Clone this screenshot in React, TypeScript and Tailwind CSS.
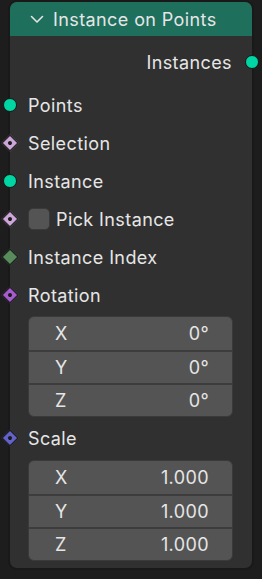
import React from 'react';

type SocketKind = 'circle' | 'diamond';

function Socket({ kind, color, dot, side = 'left' }: { kind: SocketKind; color: string; dot?: boolean; side?: 'left' | 'right' }) {
  const pos = side === 'left' ? 'left-[-7px]' : 'right-[-7px]';
  if (kind === 'circle') {
    return (
      <span
        className={`absolute ${pos} top-1/2 -translate-y-1/2 w-[14px] h-[14px] rounded-full border border-[#161616]`}
        style={{ backgroundColor: color }}
      />
    );
  }
  return (
    <span className={`absolute ${pos} top-1/2 -translate-y-1/2 w-[14px] h-[14px] flex items-center justify-center`}>
      <span
        className="w-[12px] h-[12px] shrink-0 rotate-45 border border-[#161616] flex items-center justify-center"
        style={{ backgroundColor: color }}
      >
        {dot && <span className="w-[4px] h-[4px] rounded-full bg-[#1a1a1a]" />}
      </span>
    </span>
  );
}

function Row({ label, children }: { label?: string; children?: React.ReactNode }) {
  return (
    <div className="relative h-[38px] flex items-center pl-[18px]">
      {children}
      {label && <span>{label}</span>}
    </div>
  );
}

function VectorBox({ values }: { values: [string, string][] }) {
  return (
    <div className="ml-[18px] mr-[19px] rounded-[6px] bg-[#545454] overflow-hidden border border-[#3a3a3a]">
      {values.map(([axis, value], i) => (
        <div
          key={axis}
          className={`h-[33px] flex items-center justify-between pl-[26px] pr-[23px] ${i > 0 ? 'border-t-2 border-[#3d3d3d]' : ''}`}
        >
          <span>{axis}</span>
          <span>{value}</span>
        </div>
      ))}
    </div>
  );
}

export default function App() {
  return (
    <div
      className="w-[262px] h-[579px] bg-[#1d1d1d] pt-[2px] pl-[10px] text-[18px] tracking-[0.4px] text-[#e6e6e6]"
      style={{ fontFamily: 'Inter, "Noto Sans", sans-serif' }}
    >
      <div className="relative w-[242px] h-[566px] rounded-[7px] bg-[#303030] shadow-[0_0_0_2px_#191919]">
        {/* Header */}
        <div className="h-[34px] rounded-t-[7px] bg-[#1e6f5c] flex items-center pl-[20px] gap-[9px]">
          <svg width="14" height="9" viewBox="0 0 14 9" fill="none">
            <path d="M1.5 1.5 L7 7 L12.5 1.5" stroke="#e4e4e4" strokeWidth="1.6" strokeLinecap="round" strokeLinejoin="round" />
          </svg>
          <span>Instance on Points</span>
        </div>

        {/* Output */}
        <div className="relative h-[28px] mt-[12px] flex items-center justify-end pr-[20px]">
          <span>Instances</span>
          <Socket kind="circle" color="#00d6a3" side="right" />
        </div>

        {/* Inputs */}
        <div className="mt-[10px]">
          <Row label="Points">
            <Socket kind="circle" color="#00d6a3" />
          </Row>
          <Row label="Selection">
            <Socket kind="diamond" color="#cca6d6" dot />
          </Row>
          <Row label="Instance">
            <Socket kind="circle" color="#00d6a3" />
          </Row>
          <Row>
            <Socket kind="diamond" color="#cca6d6" dot />
            <span className="w-[22px] h-[22px] rounded-[5px] bg-[#545454] border border-[#3a3a3a] mr-[6px]" />
            <span>Pick Instance</span>
          </Row>
          <Row label="Instance Index">
            <Socket kind="diamond" color="#598c5c" />
          </Row>
          <Row label="Rotation">
            <Socket kind="diamond" color="#a55ccf" dot />
          </Row>
        </div>

        <div className="mt-[2px]">
          <VectorBox values={[['X', '0°'], ['Y', '0°'], ['Z', '0°']]} />
        </div>

        <div className="mt-[2px]">
          <Row label="Scale">
            <Socket kind="diamond" color="#6363c7" dot />
          </Row>
        </div>

        <div className="mt-[3px]">
          <VectorBox values={[['X', '1.000'], ['Y', '1.000'], ['Z', '1.000']]} />
        </div>
      </div>
    </div>
  );
}
